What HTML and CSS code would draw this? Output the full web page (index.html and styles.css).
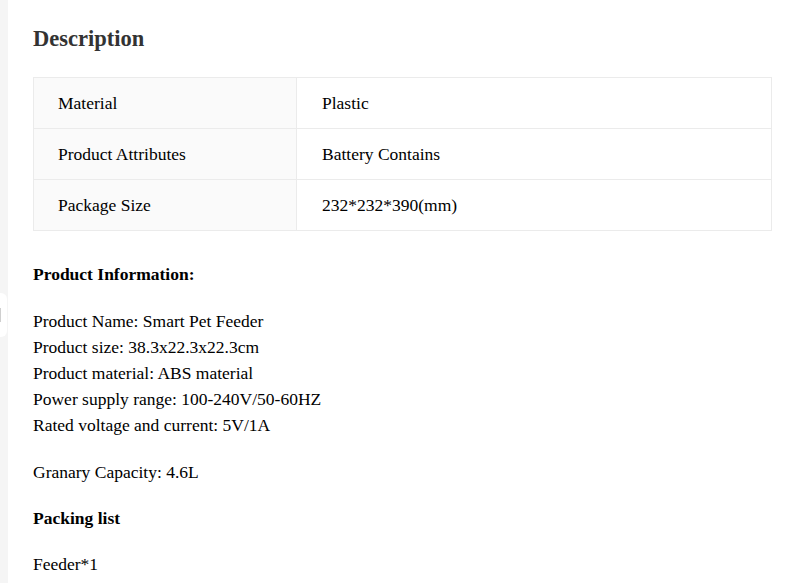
FILE: index.html
```html
<!DOCTYPE html>
<html>
<head>
<meta charset="utf-8">
<link rel="stylesheet" href="styles.css">
</head>
<body>
<div class="page">
  <div class="side"><div class="tab"><span class="tab-mark"></span></div></div>
  <main class="content">
    <h2 class="title">Description</h2>
    <table class="specs">
      <colgroup><col class="c1"><col></colgroup>
      <tr><td class="key">Material</td><td class="val">Plastic</td></tr>
      <tr><td class="key">Product Attributes</td><td class="val">Battery Contains</td></tr>
      <tr><td class="key">Package Size</td><td class="val">232*232*390(mm)</td></tr>
    </table>
    <p class="para first"><strong>Product Information:</strong></p>
    <p class="para">Product Name: Smart Pet Feeder<br>Product size: 38.3x22.3x22.3cm<br>Product material: ABS material<br>Power supply range: 100-240V/50-60HZ<br>Rated voltage and current: 5V/1A</p>
    <p class="para">Granary Capacity: 4.6L</p>
    <p class="para tight"><strong>Packing list</strong></p>
    <p class="para tight">Feeder*1</p>
  </main>
</div>
</body>
</html>
```
FILE: styles.css
```css
html, body {
  margin: 0;
  padding: 0;
  background: #ffffff;
}
body {
  font-family: "Liberation Serif", "Times New Roman", serif;
  color: #000;
}
.page {
  display: flex;
  min-height: 583px;
}
.side {
  width: 8px;
  flex: none;
  background: #f5f5f5;
  position: relative;
}
.tab {
  position: absolute;
  left: 0;
  top: 293px;
  width: 7px;
  height: 44px;
  background: #fff;
  border-radius: 0 6px 6px 0;
}
.tab-mark {
  position: absolute;
  left: 0;
  top: 15px;
  width: 1px;
  height: 14px;
  background: #cfcfcf;
}
.content {
  flex: 1;
  padding: 25px 20px 0 25px;
}
.title {
  margin: 0;
  font-size: 22.5px;
  line-height: 28px;
  font-weight: bold;
  color: #333333;
}
.specs {
  margin-top: 24px;
  width: 100%;
  border-collapse: collapse;
  font-size: 17.5px;
}
.specs .c1 {
  width: 263px;
}
.specs td {
  border: 1px solid #ebebeb;
  height: 51px;
  padding: 0 0 0 24px;
  vertical-align: middle;
  box-sizing: border-box;
}
.specs .val {
  padding-left: 25px;
}
.specs .key {
  background: #fafafa;
}
.para {
  margin: 21px 0 0;
  font-size: 17.5px;
  line-height: 26px;
}
.para.first {
  margin-top: 30px;
}
.para.tight {
  margin-top: 20px;
}
```
